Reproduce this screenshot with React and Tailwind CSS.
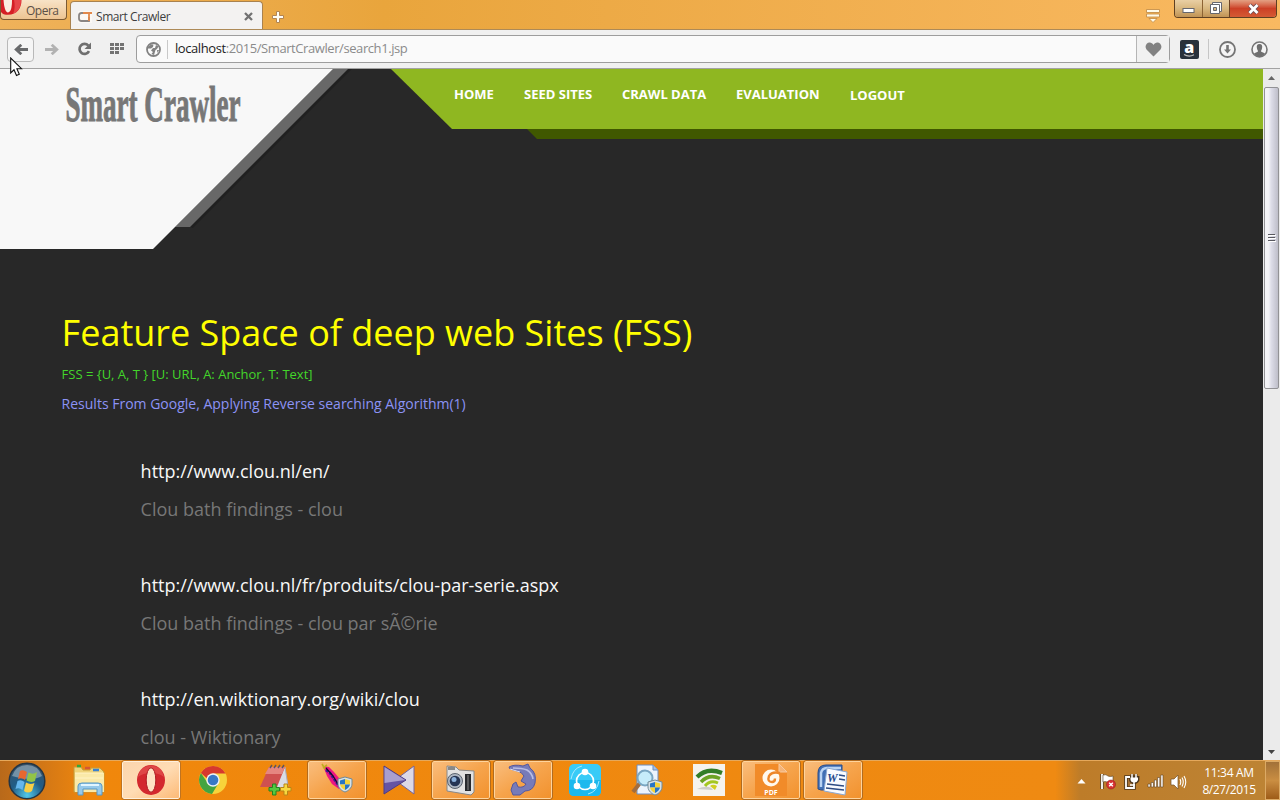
import React from 'react';

const UI = "font-['Open_Sans','Noto_Sans',sans-serif]";

function OperaMenu() {
  return (
    <div className="relative h-[20px] w-[67px] shrink-0 overflow-hidden rounded-b-[4px] border border-t-0 border-[#7c5a33] bg-gradient-to-b from-[#f8e3c7] to-[#edc492]">
      <svg className="absolute left-0 top-0" width="22" height="17" viewBox="0 0 22 17">
        <path d="M0 0H20.500C20.500 8 16 14.800 7 14.800C4 14.800 1 14 0 12Z" fill="#d51f25" />
        <path d="M2.500 0H11C11 7 10 12 7 12.500C4.500 12.500 3 7 2.500 0Z" fill="#fbeee0" />
        <path d="M13 0H20C20 7 17 12 12 14C14 10 14 4 13 0Z" fill="#e7474a" />
      </svg>
      <span className="absolute left-[25px] top-[3px] text-[12px] leading-[16px] tracking-[-0.5px] text-[#5c5046]">Opera</span>
    </div>
  );
}

function WindowButtons() {
  return (
    <div className="flex h-[18px] w-[103px] overflow-hidden rounded-b-[4px] border border-t-0 border-[#5f4022]">
      <div className="flex w-[28px] items-center justify-center border-r border-[#8c6334] bg-gradient-to-b from-[#e9cfa4] via-[#d8b77f] via-50% to-[#c09355]">
        <svg width="13" height="17" viewBox="0 0 13 17"><rect x="1" y="8.500" width="11" height="4" fill="#fff" stroke="#66676e" /></svg>
      </div>
      <div className="flex w-[27px] items-center justify-center border-r border-[#6c4223] bg-gradient-to-b from-[#e9cfa4] via-[#d8b77f] via-50% to-[#c09355]">
        <svg width="14" height="17" viewBox="0 0 14 17">
          <path d="M3.500 2.500H12.500V11.500H3.500Z" fill="#fff" stroke="#66676e" />
          <path d="M1.500 4.500H10.500V13.500H1.500Z" fill="#fff" stroke="#66676e" />
          <path d="M4.500 7.500H7.500V10.500H4.500Z" fill="#d8b77f" stroke="#66676e" />
        </svg>
      </div>
      <div className="flex flex-1 items-center justify-center bg-gradient-to-b from-[#e3a083] via-[#cc4026] via-50% to-[#d45a34]">
        <svg width="13" height="16" viewBox="0 0 13 16">
          <path d="M2.500 4L10.500 12M10.500 4L2.500 12" stroke="#6b4b52" strokeWidth="4.500" />
          <path d="M2.500 4L10.500 12M10.500 4L2.500 12" stroke="#fff" strokeWidth="2.800" />
        </svg>
      </div>
    </div>
  );
}

function TabStrip() {
  return (
    <div className="flex h-[29px] shrink-0 items-start bg-gradient-to-r from-[#efb25a] via-[#e9a53c] via-30% to-[#f9b961]">
      <OperaMenu />
      <div className="ml-[3px] mt-[1px] flex h-[28px] w-[193px] items-center rounded-t-[4px] border border-b-0 border-[#a9824e] bg-[#f3f2f1] pl-[7px] pt-[2px]">
        <svg width="14" height="12" viewBox="0 0 14 12">
          <rect width="14" height="12" fill="#fbf8f4" />
          <path d="M8 2H3.500Q1 2 1 4.500V7.500Q1 10 3.500 10H11V6" fill="none" stroke="#8a8583" strokeWidth="1.800" />
          <path d="M5 2H14M11 2V10" fill="none" stroke="#e2884a" strokeWidth="1.800" />
        </svg>
        <span className="ml-[4px] text-[12px] tracking-[-0.43px] text-[#3e3e3e]">Smart Crawler</span>
        <svg className="ml-auto mr-[9px]" width="9" height="9" viewBox="0 0 9 9"><path d="M1 1L8 8M8 1L1 8" stroke="#727272" strokeWidth="2.300" /></svg>
      </div>
      <svg className="ml-[8px] mt-[10px]" width="14" height="14" viewBox="0 0 14 14">
        <path d="M5.500 1.500H8.500V5.500H12.500V8.500H8.500V12.500H5.500V8.500H1.500V5.500H5.500Z" fill="#fffdf5" stroke="#b28552" />
      </svg>
      <svg className="ml-auto mr-[13px] mt-[8px]" width="16" height="16" viewBox="0 0 16 16">
        <path d="M1.500 1.500H14.500V4.500H1.500ZM1.500 6H14.500V9H1.500ZM4 10.500H12L8 14.500Z" fill="#fffbe9" stroke="#c08840" strokeWidth=".8" />
      </svg>
      <WindowButtons />
      <div className="w-[3px]" />
    </div>
  );
}

function Toolbar() {
  return (
    <div className="flex h-[40px] shrink-0 items-center border-b border-t border-b-[#a2a2a2] border-t-[#ad8a57] bg-[#f0f0f0]">
      <div className="ml-[7px] flex h-[25px] w-[27px] items-center justify-center rounded-[4px] border border-[#b9b9b9] bg-[#f5f5f5]">
        <svg width="14" height="11" viewBox="0 0 14 11"><path d="M7.300 .8L2.200 5.500L7.300 10.200M2.200 5.500H14" fill="none" stroke="#696a6c" strokeWidth="2.800" /></svg>
      </div>
      <svg className="ml-[11px]" width="14" height="11" viewBox="0 0 14 11"><path d="M6.700 .8L11.800 5.500L6.700 10.200M11.800 5.500H0" fill="none" stroke="#b2b2b2" strokeWidth="2.800" /></svg>
      <svg className="ml-[18px]" width="15" height="14" viewBox="0 0 15 14">
        <path d="M11.300 3.600A5 5 0 1 0 12 9.200" fill="none" stroke="#6f6f6f" strokeWidth="2.700" />
        <path d="M14 .5V7H7.500Z" fill="#6f6f6f" />
      </svg>
      <svg className="ml-[18px]" width="15" height="12" viewBox="0 0 15 12">
        <path d="M0 0H4V3H0ZM5 0H9V3H5ZM10 0H14V3H10ZM0 4H4V7H0ZM5 4H9V7H5ZM10 4H14V7H10ZM0 8H4V11H0ZM5 8H9V11H5Z" fill="#737373" />
      </svg>
      <div className="ml-[11px] flex h-[28px] w-[1034px] items-center rounded-[4px] border border-[#9d9d9d] bg-[#fafafa]">
        <svg className="ml-[9px]" width="15" height="15" viewBox="0 0 15 15">
          <circle cx="7.500" cy="7.500" r="6.500" fill="#fafafa" stroke="#818181" strokeWidth="1.800" />
          <path d="M2 5L5 2.500H7.500L7 5L5 6.500H2ZM7 6H9L10 3L12.500 4.500L11 7L9.500 8L8 13L5.500 12L7 10L5 8.500ZM11 8H13L11.500 11Z" fill="#818181" />
        </svg>
        <div className="ml-[6px] h-[19px] w-px bg-[#c9c9c9]" />
        <span className="ml-[7px] text-[13px] tracking-[-0.42px] text-[#8b8b8b]"><span className="text-[#1c1c1c]">localhost</span>:2015/SmartCrawler/search1.jsp</span>
        <div className="ml-auto flex h-full w-[33px] items-center justify-center border-l border-[#b5b5b5] bg-[#f1f1f1]">
          <svg width="17" height="15" viewBox="0 0 17 15"><path d="M8.500 14.500L1.500 7.500C-1 4 2 0 5 .5C7 .8 8 2 8.500 3C9 2 10 .8 12 .5C15 0 18 4 15.500 7.500Z" fill="#828282" /></svg>
        </div>
      </div>
      <svg className="ml-[10px] overflow-visible" width="19" height="19" viewBox="0 0 19 19">
        <rect width="19" height="19" rx="2" fill="#28313b" />
        <text x="9.200" y="13" textAnchor="middle" fontFamily="Open Sans" fontWeight="800" fontSize="16" fill="#fff">a</text>
        <path d="M4 14.500Q9 17.500 14 14.700" fill="none" stroke="#bcbcbc" strokeWidth="1.200" />
      </svg>
      <div className="ml-[9px] h-[20px] w-px bg-[#c6c6c6]" />
      <svg className="ml-[10px]" width="17" height="17" viewBox="0 0 17 17">
        <circle cx="8.500" cy="8.500" r="7.500" fill="#f5f5f5" stroke="#757575" strokeWidth="1.800" />
        <path d="M7.200 4H9.800V8.500H12L8.500 12.500L5 8.500H7.200Z" fill="#757575" />
      </svg>
      <svg className="ml-[15px]" width="17" height="17" viewBox="0 0 17 17">
        <circle cx="8.500" cy="8.500" r="7.500" fill="#f5f5f5" stroke="#757575" strokeWidth="1.600" />
        <path d="M8.500 3C11 3 11.700 5 11 7.500C10.700 9 10 9.500 10 10.500C11 11.500 13 11.500 14 12.500C11 17 6 17 3 12.500C4 11.500 6 11.500 7 10.500C7 9.500 6.300 9 6 7.500C5.300 5 6 3 8.500 3Z" fill="#6f6f6f" />
      </svg>
    </div>
  );
}

function SiteHeader() {
  return (
    <header className="relative flex h-[180px] shrink-0 items-start">
      <div className="absolute inset-0 bg-[#202020] [clip-path:polygon(340px_0,352px_0,193px_159px,190px_158px)]" />
      <div className="absolute inset-0 bg-[#686868] [clip-path:polygon(333px_0,348px_0,190px_158px,175px_158px)]" />
      <div className="absolute inset-0 bg-[#f8f8f8] [clip-path:polygon(0_0,333px_0,153px_180px,0_180px)]" />
      <div className="absolute inset-0 bg-[#405800] [clip-path:polygon(527px_60px,100%_60px,100%_70px,537px_70px)]" />
      <div className="absolute inset-0 bg-[#8fb721] [clip-path:polygon(391px_0,100%_0,100%_60px,452px_60px)]" />
      <svg className="relative ml-[64px] mt-[2px] overflow-visible" width="180" height="68" viewBox="0 0 180 68">
        <text x="1.500" y="49.500" textLength="175" lengthAdjust="spacingAndGlyphs" fontFamily="Liberation Serif, serif" fontWeight="700" fontSize="50" fill="#777777" stroke="#777777" strokeWidth="1">Smart Crawler</text>
      </svg>
      <nav className="relative ml-[210px] mt-[16px] flex gap-[30px] text-[13px] font-bold leading-[18px] text-white">
        <a className="w-[40px] whitespace-nowrap">HOME</a>
        <a className="w-[68px] whitespace-nowrap">SEED SITES</a>
        <a className="w-[84px] whitespace-nowrap">CRAWL DATA</a>
        <a className="w-[84px] whitespace-nowrap">EVALUATION</a>
        <a className="mt-px whitespace-nowrap">LOGOUT</a>
      </nav>
    </header>
  );
}

const results = [
  ['http://www.clou.nl/en/', 'Clou bath findings - clou'],
  ['http://www.clou.nl/fr/produits/clou-par-serie.aspx', 'Clou bath findings - clou par sÃ©rie'],
  ['http://en.wiktionary.org/wiki/clou', 'clou - Wiktionary'],
];

function Page() {
  return (
    <main className="flex min-w-0 flex-1 flex-col overflow-hidden bg-[#282828] font-['Open_Sans',sans-serif]">
      <SiteHeader />
      <div className="flex flex-col whitespace-nowrap pl-[61.600px] pt-[60px]">
        <h1 className="text-[36px] leading-[48px] text-[#ffff00]">Feature Space of deep web Sites (FSS)</h1>
        <p className="mt-[8px] text-[13px] leading-[18px] text-[#43d62a]">FSS = {'{U, A, T }'} [U: URL, A: Anchor, T: Text]</p>
        <p className="mt-[10px] text-[14px] leading-[22px] text-[#8c93f5]">Results From Google, Applying Reverse searching Algorithm(1)</p>
        <div className="mt-[41px] flex flex-col pl-[79px] text-[18px]">
          {results.map(([url, title]) => (
            <div key={url} className="flex h-[114px] flex-col gap-[8px] leading-[30px]">
              <a className="text-[#f8f8f8]">{url}</a>
              <p className="text-[#777777]">{title}</p>
            </div>
          ))}
        </div>
      </div>
    </main>
  );
}

function Scrollbar() {
  return (
    <div className="flex w-[17px] shrink-0 flex-col items-center bg-[#ebebeb]">
      <svg className="mt-[7px]" width="7" height="4" viewBox="0 0 7 4"><path d="M0 4L3.500 0L7 4Z" fill="#666" /></svg>
      <div className="mt-[7px] flex h-[302px] w-[15px] items-center justify-center rounded-[2px] border border-[#929295] bg-linear-to-r from-[#f3f3f6] from-25% via-[#dcdce7] via-50% to-[#bebec9]">
        <svg width="8" height="8" viewBox="0 0 8 8"><path d="M0 .5H7M0 3.500H7M0 6.500H7" stroke="#58585f" /><path d="M1 1.500H8M1 4.500H8M1 7.500H8" stroke="#fff" /></svg>
      </div>
      <svg className="mb-[6px] mt-auto" width="7" height="4" viewBox="0 0 7 4"><path d="M0 0L3.500 4L7 0Z" fill="#444" /></svg>
    </div>
  );
}

const Shield = ({ x, y }) => (
  <g transform={`translate(${x} ${y})`}>
    <path d="M7 0L14 2V7C14 11 10 14 7 15C4 14 0 11 0 7V2Z" fill="#d7e2e8" stroke="#718995" />
    <path d="M7 2V7.500H2V3.500Z" fill="#2775c4" /><path d="M7 2L12 3.500V7.500H7Z" fill="#f4d339" />
    <path d="M2 7.500H7V13Q3 11 2 7.500Z" fill="#f4d339" /><path d="M12 7.500H7V13Q11 11 12 7.500Z" fill="#2775c4" />
  </g>
);

const icons = {
  explorer: (
    <>
      <path d="M1 6V3H8L10 6H17L18 4H27L31 8V28H1Z" fill="#f0d47b" stroke="#c49a3c" />
      <path d="M4 2H8" stroke="#35a63a" strokeWidth="2.500" />
      <path d="M12 4H17" stroke="#d45834" strokeWidth="2.500" /><path d="M20 6H26" stroke="#3b81d0" strokeWidth="2.500" />
      <path d="M2 9H31V28H2Z" fill="#fae9a8" /><path d="M2 14H30M2 9H30" stroke="#fff3c5" />
      <path d="M5 31V22Q5 19 9 19H25Q29 19 29 22V31H24V25H10V31Z" fill="#96c9ea" stroke="#5797c3" />
      <path d="M8 21H26" stroke="#e1f5ff" strokeWidth="2" />
    </>
  ),
  opera: (
    <>
      <ellipse cx="16" cy="16" rx="14" ry="15" fill="#d3282e" />
      <path d="M3 13Q5 2 16 1.500Q27 2 29 13Q24 9 16 9Q8 9 3 13Z" fill="#e85a57" opacity=".6" />
      <ellipse cx="16" cy="16" rx="4.800" ry="12.200" fill="#ffe2c4" stroke="#ae1b23" />
    </>
  ),
  chrome: (
    <>
      <circle cx="16" cy="16" r="14" fill="#f7d33b" />
      <path d="M3.900 9A14 14 0 0 0 15 30L21 20L16 16L10 18Z" fill="#43a440" />
      <path d="M16 2A14 14 0 0 1 28.500 9.500H16L9.500 14L3.900 9A14 14 0 0 1 16 2Z" fill="#d7382e" />
      <circle cx="16" cy="16" r="6.700" fill="#eef2f6" /><circle cx="16" cy="16" r="5.300" fill="#3878c6" />
    </>
  ),
  notes: (
    <>
      <path d="M26 3L29 22L18 25L12 20Z" fill="#d9dce4" stroke="#aab" />
      <path d="M10 3H26L18 23H1Z" fill="#cf5150" /><path d="M10 3H26L23 10H6Z" fill="#e58680" />
      <path d="M11 4L13 1M15 4L17 1M19 4L21 1M23 4L25 1" stroke="#5f5560" strokeWidth="1.500" />
      <path d="M10 23.500H13.500V20H17V23.500H20.500V27H17V31H13.500V27H10Z" fill="#55c83f" stroke="#238322" />
      <path d="M21.500 23.500H25V20H28.500V23.500H32V27H28.500V31H25V27H21.500Z" fill="#f7d83f" stroke="#b98416" />
    </>
  ),
  feather: (
    <>
      <path d="M2 2L8 3L13 8L18 14L21 22L18 25L11 20L6 12L4 7Z" fill="#ed1682" />
      <path d="M5 6L9 9L13 15L18 22" fill="none" stroke="#3a1ca0" strokeWidth="2.600" strokeDasharray="3 1" />
      <path d="M5 4L12 12L18 22" fill="none" stroke="#1b0a2c" strokeWidth="1.300" />
      <path d="M1 0L4 5M2 4L6 1" stroke="#bfae20" strokeWidth="1.600" />
      <Shield x={17} y={13} />
    </>
  ),
  kmplayer: (
    <>
      <path d="M31 2V30L12 16Z" fill="#dcd9e8" stroke="#74659c" />
      <path d="M1 2V30L23 16Z" fill="#6554a4" stroke="#4d3c87" /><path d="M1.500 3L22 16L1.500 19Z" fill="#a99fce" />
    </>
  ),
  camera: (
    <>
      <path d="M2 6V2L11 3L14 6L29 7V28L26 31L2 27Z" fill="#e2e2e2" stroke="#888" />
      <path d="M3 3H10V6H3Z" fill="#888" /><path d="M20 10H26V27H20Z" fill="#282a2e" /><path d="M23 11V26" stroke="#888" />
      <circle cx="10" cy="17" r="7.500" fill="#aeb7c3" stroke="#5c6470" /><circle cx="10" cy="17" r="5.300" fill="#243454" /><circle cx="9" cy="15.500" r="2.500" fill="#8bb1dc" />
    </>
  ),
  dolphin: (
    <>
      <path d="M2 3Q7 0 16 2L21 0L23 4Q30 9 28 19Q26 27 18 27L13 31L6 31L4 26L6 20L9 18L11 23Q17 24 19 20L14 17L17 12Q15 8 10 7L3 5Z" fill="#777bb9" stroke="#5358a0" />
      <path d="M6 4Q15 4 20 6Q25 9 26 15" fill="none" stroke="#b9bde4" strokeWidth="1.700" /><path d="M3 5L13 8" stroke="#dfe2f4" />
    </>
  ),
  shareit: (
    <>
      <rect width="32" height="32" rx="5" fill="#38cbf7" /><path d="M0 16H32V27Q32 32 27 32H5Q0 32 0 27Z" fill="#1cb9ee" />
      <circle cx="16" cy="17" r="8.500" fill="none" stroke="#fff" strokeWidth="1.700" />
      <circle cx="16" cy="8" r="3.300" fill="#fff" /><circle cx="8" cy="22" r="3.300" fill="#fff" /><circle cx="24" cy="22" r="3.300" fill="#fff" />
      <path d="M2 15Q4 4 13 2M19 30Q28 28 30 17" fill="none" stroke="#a8e9ff" />
    </>
  ),
  search: (
    <>
      <path d="M6 1H22L27 6V30H6Z" fill="#edf4fc" stroke="#6d8dc0" /><path d="M22 1V6H27" fill="#a8c1e4" stroke="#6d8dc0" />
      <path d="M9 19L2 28" stroke="#a26d3e" strokeWidth="4" /><circle cx="14" cy="14" r="7.500" fill="#c6ecfa" stroke="#7aa6c2" strokeWidth="2" />
      <Shield x={17} y={16} />
    </>
  ),
  wifi: (
    <>
      <rect width="32" height="32" fill="#f5f3ed" />
      <path d="M4 13Q14 3 29 9" fill="none" stroke="#337d27" strokeWidth="4.200" />
      <path d="M8 18Q16 9.500 27 14.500" fill="none" stroke="#6da324" strokeWidth="3.500" />
      <path d="M12 22Q17 15.500 25 19" fill="none" stroke="#a4c720" strokeWidth="3" />
      <path d="M17 22Q20 19.500 24 22L22 26Z" fill="#d1ce21" /><path d="M4 25Q16 20 20 26Z" fill="#a8a8a8" opacity=".5" />
    </>
  ),
  pdf: (
    <>
      <path d="M0 0H24L32 8V32H0Z" fill="#f18b29" /><path d="M24 0V8H32Z" fill="#f5b478" stroke="#f8caa0" />
      <circle cx="16" cy="14" r="8.500" fill="#fff8ed" />
      <path d="M25 9Q17 7 14 12Q12 18 17 18Q20 18 20 14.500" fill="none" stroke="#ed8629" strokeWidth="2.400" />
      <text x="16" y="30.500" textAnchor="middle" fontFamily="Open Sans" fontWeight="700" fontSize="7" fill="#fff">PDF</text>
    </>
  ),
  word: (
    <>
      <path d="M1 25V9Q1 1 9 1H25V26H4Z" fill="#426fb4" stroke="#294c89" /><path d="M4 23V9Q5 4 10 4H24" fill="none" stroke="#b9d3f3" strokeWidth="2.500" />
      <path d="M10 4L30 8L28 31L7 27Z" fill="#f9fbff" stroke="#8ba9d3" />
      <text x="10" y="18" fontFamily="Liberation Serif" fontWeight="700" fontStyle="italic" fontSize="12" fill="#26488b">W</text>
      <path d="M22 11L28 12M22 15L28 16M10 20L27 22M9 24L27 26" stroke="#2e4c84" strokeWidth="1.700" />
    </>
  ),
};

const tasks = [
  ['explorer', ''], ['opera', 'active'], ['chrome', ''], ['notes', ''], ['feather', 'open'], ['kmplayer', ''],
  ['camera', 'open'], ['dolphin', 'open'], ['shareit', ''], ['search', ''], ['wifi', ''], ['pdf', 'open'], ['word', 'open'],
];

const frames = {
  '': 'border-transparent',
  open: 'border-[#ffd49c] bg-gradient-to-br from-[#f9bd7c] via-[#f6a44c] to-[#f2922c] outline outline-1 outline-[#b16b1f]',
  active: 'border-[#fff0dc] bg-gradient-to-br from-[#fbd5ad] via-[#ffdcb4] to-[#fcba76] outline outline-1 outline-[#bf7320]',
};

function StartOrb() {
  return (
    <svg className="ml-[8px]" width="38" height="38" viewBox="0 0 38 38">
      <defs>
        <radialGradient id="orb" cx=".5" cy=".9" r=".9"><stop offset="0" stopColor="#52c9e9" /><stop offset=".5" stopColor="#205c86" /><stop offset="1" stopColor="#39536a" /></radialGradient>
      </defs>
      <circle cx="19" cy="19" r="17.800" fill="url(#orb)" stroke="#243544" strokeWidth="1.500" />
      <path d="M4 14Q8 3 19 3Q30 3 34 14Q24 20 4 14Z" fill="#bacbd5" opacity=".5" />
      <path d="M12 9Q15 7 19 10L17 18Q14 15 10 17Z" fill="#e7672f" /><path d="M20.500 10.500Q25 13 29 10L27 19Q23 21 18.500 18.500Z" fill="#92c447" />
      <path d="M9.500 19Q13 17 16.500 20L14.500 28Q11 25 7.500 27Z" fill="#65b6ed" /><path d="M18 20.500Q22 23 26.500 21L24 29Q20 32 16 29Z" fill="#f8ce46" />
    </svg>
  );
}

function Tray() {
  return (
    <div className="flex h-full items-center text-white">
      <svg className="mr-[14px] mt-[2px]" width="9" height="5" viewBox="0 0 9 5"><path d="M.5 4.500L4.500 0L8.500 4.500Z" fill="#fff" /></svg>
      <svg className="mt-[2px]" width="16" height="17" viewBox="0 0 16 17">
        <path d="M2 1V16" stroke="#5d4426" strokeWidth="3.500" /><path d="M2 1V16" stroke="#fff" strokeWidth="1.800" />
        <path d="M3 2Q6 1 8 3Q10 4 13 3V9Q9 11 7 9Q5 8 3 9Z" fill="#fff" stroke="#5d4426" strokeWidth=".6" />
        <circle cx="11" cy="11.500" r="4.500" fill="#d83334" stroke="#8c1716" strokeWidth=".5" /><path d="M9.200 9.700L12.800 13.300M12.800 9.700L9.200 13.300" stroke="#fff" strokeWidth="1.400" />
      </svg>
      <svg className="ml-[8px] mt-[1px]" width="16" height="17" viewBox="0 0 16 17">
        <path d="M2 4H10V15H2Z" fill="#a77235" stroke="#4d371d" strokeWidth="3.600" />
        <path d="M8 1V4M12 1V4M6.500 4.500H14V7Q13 9.500 10.500 9.500Q7 9.500 6.500 7Z" fill="#fff" stroke="#4d371d" strokeWidth="2.800" />
        <path d="M6 4H2V15H10V11" fill="none" stroke="#fff" strokeWidth="1.800" />
        <path d="M6.500 4.500H14V7Q13 9.500 10.500 9.500Q7 9.500 6.500 7Z" fill="#fff" /><path d="M8 1V5M12 1V5M10 9V12H6" fill="none" stroke="#fff" strokeWidth="1.500" />
      </svg>
      <svg className="ml-[7px] mt-[1px]" width="17" height="14" viewBox="0 0 17 14">
        <path d="M1 10H3.200V13H1ZM4.200 8.500H6.400V13H4.200ZM7.400 6H9.600V13H7.400ZM10.600 3.500H12.800V13H10.600ZM13.800 1H16V13H13.800Z" fill="#fff" stroke="#5f4120" strokeWidth=".6" />
      </svg>
      <svg className="ml-[6px] mt-[2px]" width="17" height="16" viewBox="0 0 17 16">
        <path d="M1 5H4L8 1V15L4 11H1Z" fill="#fff" stroke="#735026" strokeWidth=".7" />
        <path d="M10 5Q11.500 8 10 11M12 3.500Q14.500 8 12 12.500M14 2Q17.500 8 14 14" fill="none" stroke="#fff" strokeWidth="1.100" />
      </svg>
      <div className="ml-[5px] flex w-[74px] flex-col items-center text-[12px] leading-[17px] tracking-[-0.3px]">
        <span>11:34 AM</span>
        <span className="tracking-[-0.4px]">8/27/2015</span>
      </div>
      <div className="ml-[-1px] h-full w-[15px] border border-[#dcaa65] bg-gradient-to-b from-[#a27138] via-[#ca8e42] to-[#9e5c17]" />
    </div>
  );
}

function Taskbar() {
  return (
    <div className="flex h-[40px] shrink-0 items-center border-t border-[#e5a85b] bg-linear-to-r from-[#b8691a] via-[#f0870b] via-7% to-[#ef8a12] to-82%">
      <StartOrb />
      <div className="ml-[12px] flex h-full">
        {tasks.map(([name, state]) => (
          <div key={name} className="flex h-full w-[62px] justify-center">
            <div className={`flex h-[38px] w-[58px] items-center justify-center rounded-[2px] border ${frames[state]}`}>
              <svg className="overflow-visible" width="32" height="32" viewBox="0 0 32 32">{icons[name]}</svg>
            </div>
          </div>
        ))}
      </div>
      <div className="flex h-full flex-1 justify-end bg-linear-to-r from-transparent from-46% via-[#bd7c29] via-52% to-[#bd8435]">
        <Tray />
      </div>
    </div>
  );
}

export default function App() {
  return (
    <div className={`relative flex h-[800px] w-[1280px] flex-col overflow-hidden ${UI}`}>
      <TabStrip />
      <Toolbar />
      <div className="flex h-[691px] shrink-0">
        <Page />
        <Scrollbar />
      </div>
      <Taskbar />
      <svg className="absolute left-[10px] top-[57px]" width="13" height="20" viewBox="0 0 13 20">
        <path d="M.7 1V16L4 12.800L6.500 18.500L9.300 17.300L6.900 11.700H11.500Z" fill="#fff" stroke="#111" strokeWidth="1.100" />
      </svg>
    </div>
  );
}
